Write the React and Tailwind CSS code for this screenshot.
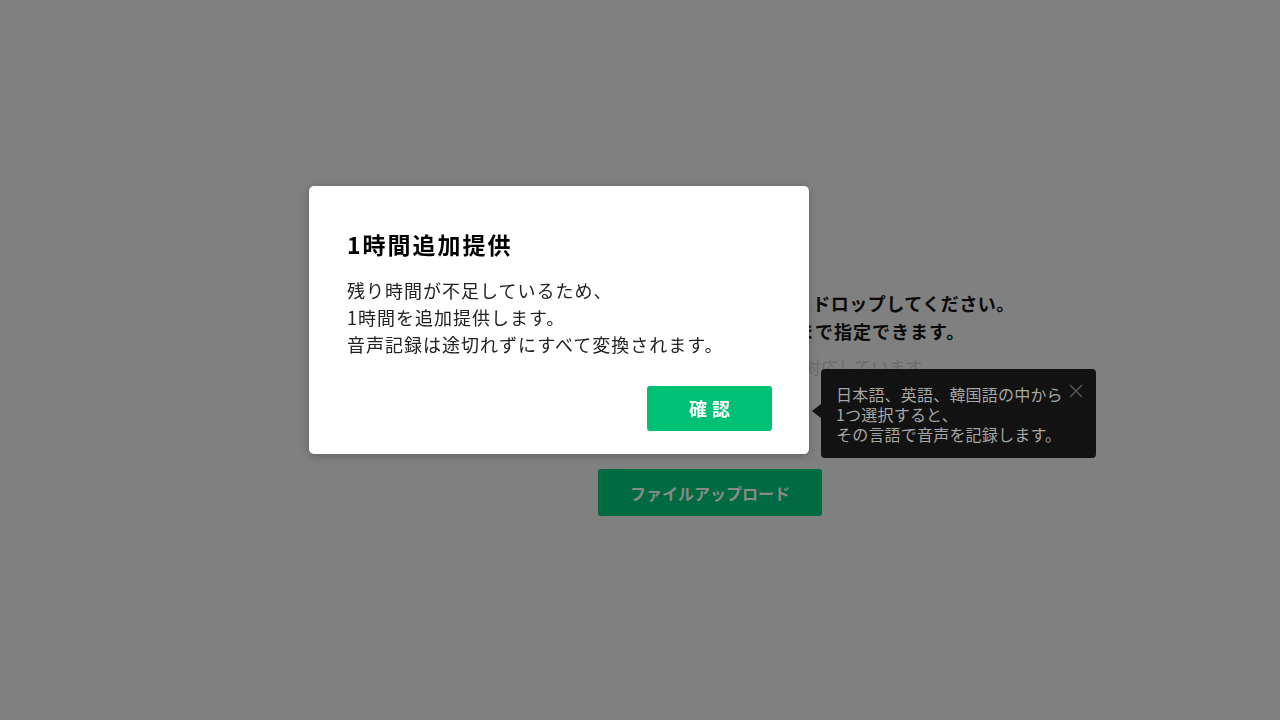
const FONT = { fontFamily: '"Noto Sans CJK JP", "Noto Sans", sans-serif' };

function Tooltip() {
  return (
    <div className="absolute left-[223px] top-[-30px] w-[275px] rounded-[4px] bg-[#121212] pl-[15px] pr-[30px] pt-[15px] pb-[14px] text-[16px] leading-[20px] tracking-[0.2px] text-[#a6a6a6]">
      <span className="absolute left-[-9px] top-[35px] h-0 w-0 border-y-[7px] border-r-[9px] border-y-transparent border-r-[#121212]" />
      <button className="absolute right-[13px] top-[15px] text-[#555]">
        <svg width="14" height="14" viewBox="0 0 14 14" fill="none" stroke="currentColor" strokeWidth="1.5">
          <path d="M1 1L13 13M13 1L1 13" />
        </svg>
      </button>
      <p className="whitespace-nowrap">日本語、英語、韓国語の中から</p>
      <p>1つ選択すると、</p>
      <p>その言語で音声を記録します。</p>
    </div>
  );
}

function Modal() {
  return (
    <div className="fixed left-[309px] top-[186px] w-[500px] rounded-[5px] bg-white pl-[38px] pr-[37px] pt-[42px] pb-[23px] shadow-[0_2px_8px_rgba(0,0,0,0.25)]">
      <h2 className="text-[23px] font-bold leading-[32px] tracking-[2px] text-black">1時間追加提供</h2>
      <div className="mt-[17px] text-[18px] leading-[27px] tracking-[1px] text-[#222]">
        <p>残り時間が不足しているため、</p>
        <p>1時間を追加提供します。</p>
        <p>音声記録は途切れずにすべて変換されます。</p>
      </div>
      <div className="mt-[28px] flex justify-end">
        <button className="h-[45px] w-[125px] rounded-[3px] bg-[#00c073] pl-[5px] text-[18px] font-bold tracking-[5px] text-white">
          確認
        </button>
      </div>
    </div>
  );
}

export default function App() {
  return (
    <div className="relative h-[720px] w-[1280px] overflow-hidden bg-[#808080]" style={FONT}>
      <div className="flex h-full">
        <div className="w-[140px] shrink-0" />
        <main className="flex flex-1 flex-col items-center pt-[289px]">
          <p className="text-[18px] font-bold leading-[28px] tracking-[0.5px] text-[#0a0a0a]">
            変換する音声・動画ファイルをここにドラッグ＆ドロップしてください。
          </p>
          <p className="text-[18px] font-bold leading-[28px] tracking-[1px] text-[#0a0a0a]">
            ファイルは一度に最大三つ、計十二時間まで指定できます。
          </p>
          <p className="mt-[10px] text-[17px] leading-[24px] text-[#6c6c6c]">
            MP3、WAV、M4A形式などのファイルに対応しています
          </p>
          <div className="relative mt-[20px] flex h-[44px] w-[224px] items-center justify-center">
            <Tooltip />
          </div>
          <button className="mt-[26px] h-[47px] w-[224px] rounded-[3px] bg-[#006b40] text-[16px] font-bold text-[#8a8a8a]">
            ファイルアップロード
          </button>
        </main>
      </div>
      <Modal />
    </div>
  );
}
